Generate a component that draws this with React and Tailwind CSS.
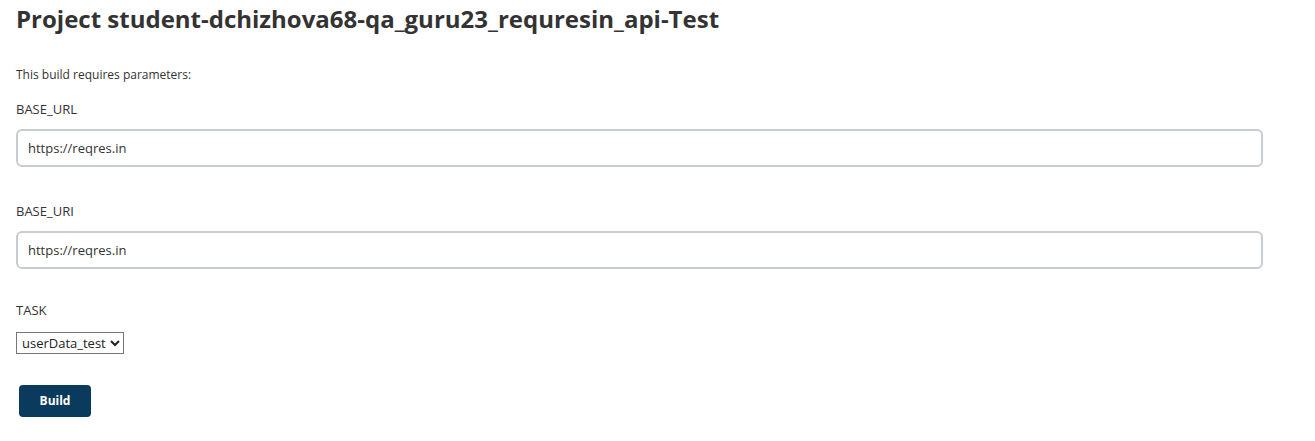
export default function App() {
  const params = [
    { name: 'BASE_URL', value: 'https://reqres.in' },
    { name: 'BASE_URI', value: 'https://reqres.in' },
  ];

  return (
    <div className="min-h-[441px] bg-white text-[#333] pl-[16px] pr-[52px]" style={{ fontFamily: '"Open Sans", "Noto Sans", sans-serif' }}>
      <h1 className="pt-[3px] text-[24px] leading-[32px] font-bold text-[#333]">
        Project student-dchizhova68-qa_guru23_requresin_api-Test
      </h1>

      <p className="mt-[32px] text-[12px] leading-[16px] text-[#333]">This build requires parameters:</p>

      {params.map((p, i) => (
        <div key={p.name} className={i === 0 ? 'mt-[17px]' : 'mt-[35px]'}>
          <div className="text-[13px] leading-[18px] font-medium text-[#333]">{p.name}</div>
          <input
            type="text"
            defaultValue={p.value}
            className="mt-[11px] block w-full h-[38px] px-[10px] text-[13px] text-[#333] bg-white border-2 border-[#c8ccd1] rounded-[6px] outline-none"
          />
        </div>
      ))}

      <div className="mt-[32px]">
        <div className="text-[13px] leading-[18px] font-medium text-[#333]">TASK</div>
        <select
          defaultValue="userData_test"
          className="mt-[13px] h-[22px] w-[108px] border border-[#767676] bg-white text-[13px] text-[#222] pl-[1px] appearance-auto"
          style={{ fontFamily: '"Open Sans", sans-serif' }}
        >
          <option value="userData_test">userData_test</option>
        </select>
      </div>

      <button className="mt-[31px] ml-[3px] block w-[72px] h-[32px] rounded-[4px] bg-[#0b3b5c] text-white text-[12px] font-bold">
        Build
      </button>
    </div>
  );
}
